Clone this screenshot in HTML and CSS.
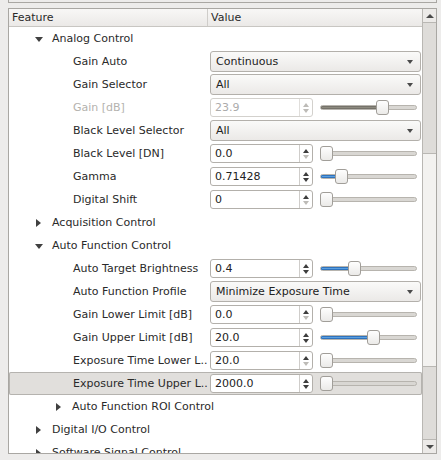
FILE: index.html
```html
<!DOCTYPE html>
<html>
<head>
<meta charset="utf-8">
<link rel="stylesheet" href="styles.css">
</head>
<body>
<div class="stub"></div>
<div class="tree">
  <div class="main">
    <div class="header">
      <div class="hcell hfeat">Feature</div>
      <div class="hcell hval">Value</div>
    </div>
    <div class="rows">
      <div class="row"><div class="name l1"><span class="arr down"></span>Analog Control</div><div class="val"></div></div>

      <div class="row"><div class="name leaf2">Gain Auto</div><div class="val"><div class="combo"><span>Continuous</span><span class="carr"></span></div></div></div>
      <div class="row"><div class="name leaf2">Gain Selector</div><div class="val"><div class="combo"><span>All</span><span class="carr"></span></div></div></div>
      <div class="row"><div class="name leaf2 dis">Gain [dB]</div><div class="val">
        <div class="spin dis"><span class="stext">23.9</span><span class="sbtn"><i class="up off"></i><i class="dn off"></i></span></div>
        <div class="slider"><div class="track"><div class="fill gray" style="width:57px"></div></div><div class="knob" style="left:56px"></div></div>
      </div></div>
      <div class="row"><div class="name leaf2">Black Level Selector</div><div class="val"><div class="combo"><span>All</span><span class="carr"></span></div></div></div>
      <div class="row"><div class="name leaf2">Black Level [DN]</div><div class="val">
        <div class="spin"><span class="stext">0.0</span><span class="sbtn"><i class="up"></i><i class="dn off"></i></span></div>
        <div class="slider"><div class="track"></div><div class="knob" style="left:0px"></div></div>
      </div></div>
      <div class="row"><div class="name leaf2">Gamma</div><div class="val">
        <div class="spin"><span class="stext">0.71428</span><span class="sbtn"><i class="up"></i><i class="dn"></i></span></div>
        <div class="slider"><div class="track"><div class="fill" style="width:16px"></div></div><div class="knob" style="left:15px"></div></div>
      </div></div>
      <div class="row"><div class="name leaf2">Digital Shift</div><div class="val">
        <div class="spin"><span class="stext">0</span><span class="sbtn"><i class="up"></i><i class="dn off"></i></span></div>
        <div class="slider"><div class="track"></div><div class="knob" style="left:0px"></div></div>
      </div></div>

      <div class="row"><div class="name l1"><span class="arr right"></span>Acquisition Control</div><div class="val"></div></div>
      <div class="row"><div class="name l1"><span class="arr down"></span>Auto Function Control</div><div class="val"></div></div>

      <div class="row"><div class="name leaf2">Auto Target Brightness</div><div class="val">
        <div class="spin"><span class="stext">0.4</span><span class="sbtn"><i class="up"></i><i class="dn"></i></span></div>
        <div class="slider"><div class="track"><div class="fill" style="width:29px"></div></div><div class="knob" style="left:28px"></div></div>
      </div></div>
      <div class="row"><div class="name leaf2">Auto Function Profile</div><div class="val"><div class="combo"><span>Minimize Exposure Time</span><span class="carr"></span></div></div></div>
      <div class="row"><div class="name leaf2">Gain Lower Limit [dB]</div><div class="val">
        <div class="spin"><span class="stext">0.0</span><span class="sbtn"><i class="up"></i><i class="dn off"></i></span></div>
        <div class="slider"><div class="track"></div><div class="knob" style="left:0px"></div></div>
      </div></div>
      <div class="row"><div class="name leaf2">Gain Upper Limit [dB]</div><div class="val">
        <div class="spin"><span class="stext">20.0</span><span class="sbtn"><i class="up"></i><i class="dn"></i></span></div>
        <div class="slider"><div class="track"><div class="fill" style="width:48px"></div></div><div class="knob" style="left:47px"></div></div>
      </div></div>
      <div class="row"><div class="name leaf2">Exposure Time Lower L..</div><div class="val">
        <div class="spin"><span class="stext">20.0</span><span class="sbtn"><i class="up"></i><i class="dn off"></i></span></div>
        <div class="slider"><div class="track"></div><div class="knob" style="left:0px"></div></div>
      </div></div>
      <div class="row sel"><div class="name leaf2">Exposure Time Upper L..</div><div class="val">
        <div class="spin"><span class="stext">2000.0</span><span class="sbtn"><i class="up"></i><i class="dn"></i></span></div>
        <div class="slider"><div class="track"></div><div class="knob" style="left:0px"></div></div>
      </div></div>
      <div class="row"><div class="name l2"><span class="arr right"></span>Auto Function ROI Control</div><div class="val"></div></div>

      <div class="row"><div class="name l1"><span class="arr right"></span>Digital I/O Control</div><div class="val"></div></div>
      <div class="row"><div class="name l1"><span class="arr right"></span>Software Signal Control</div><div class="val"></div></div>
    </div>
  </div>
  <div class="sbar">
    <div class="sbtn-v"><span class="sup"></span></div>
    <div class="strack"><div class="sthumb"></div></div>
    <div class="sbtn-v"><span class="sdn"></span></div>
  </div>
</div>
</body>
</html>
```

FILE: styles.css
```css
* { box-sizing: border-box; }
html, body { margin: 0; padding: 0; }
body {
  background: #edeceb;
  font-family: "DejaVu Sans", sans-serif;
  font-size: 11px;
  color: #2a2a2a;
  width: 441px;
  height: 460px;
  overflow: hidden;
}
.stub {
  margin: 0 4px 0 8px;
  height: 3px;
  border: 1px solid #a9a7a3;
  border-top: none;
}
.tree {
  margin: 5px 4px 0 8px;
  height: 446px;
  border: 1px solid #a9a7a3;
  background: #fff;
  display: flex;
}
.main {
  flex: 1;
  display: flex;
  flex-direction: column;
  min-width: 0;
}
.header {
  display: flex;
  height: 18px;
  border-bottom: 1px solid #c8c6c2;
  background: linear-gradient(#f8f7f6, #ebe9e7);
  flex: none;
}
.hcell {
  display: flex;
  align-items: center;
  padding-left: 3px;
  color: #2a2a2a;
}
.hfeat { width: 199px; border-right: 1px solid #cfcdca; }
.hval { flex: 1; padding-left: 3px; }
.rows {
  flex: 1;
  overflow: hidden;
}
.row {
  display: flex;
  height: 23px;
  align-items: center;
}
.row.sel {
  background: #e1dfdc;
  box-shadow: inset 0 0 0 1px #b5b3af;
  border-radius: 2px;
}
.name {
  width: 199px;
  flex: none;
  white-space: nowrap;
  display: flex;
  align-items: center;
}
.name.l1 { padding-left: 26px; }
.name.l2 { padding-left: 46px; }
.name.leaf2 { padding-left: 64px; }
.name.dis { color: #b4b2ae; }
.arr {
  width: 17px;
  height: 10px;
  position: relative;
  flex: none;
}
.arr.down::before {
  content: "";
  position: absolute;
  left: 0; top: 3px;
  border-left: 4.5px solid transparent;
  border-right: 4.5px solid transparent;
  border-top: 5px solid #404040;
}
.arr.right::before {
  content: "";
  position: absolute;
  left: 1px; top: 1px;
  border-top: 4.5px solid transparent;
  border-bottom: 4.5px solid transparent;
  border-left: 5px solid #404040;
}
.val {
  flex: 1;
  display: flex;
  align-items: center;
  padding-left: 2px;
}
.combo {
  width: 211px;
  height: 21px;
  border: 1px solid #b3b0ab;
  border-radius: 3px;
  background: linear-gradient(#fafaf9, #ebe9e7);
  display: flex;
  align-items: center;
  justify-content: space-between;
  padding: 0 7px 0 5px;
  color: #222;
}
.carr {
  width: 0; height: 0;
  border-left: 3.5px solid transparent;
  border-right: 3.5px solid transparent;
  border-top: 4px solid #4a4a4a;
}
.spin {
  width: 103px;
  height: 19px;
  border: 1px solid #b3b0ab;
  border-radius: 3px;
  background: #fff;
  display: flex;
  align-items: stretch;
  color: #222;
}
.spin.dis { border-color: #d3d1cd; color: #ababab; }
.stext {
  flex: 1;
  display: flex;
  align-items: center;
  padding-left: 4px;
}
.sbtn {
  width: 13px;
  border-left: 1px solid #cfcdca;
  display: flex;
  flex-direction: column;
  align-items: center;
  justify-content: center;
  gap: 2px;
}
.spin.dis .sbtn { border-left-color: #e0dedb; }
.sbtn i {
  display: block;
  width: 0; height: 0;
  border-left: 3.5px solid transparent;
  border-right: 3.5px solid transparent;
}
.sbtn i.up { border-bottom: 4px solid #3d3d3d; }
.sbtn i.dn { border-top: 4px solid #3d3d3d; }
.sbtn i.up.off { border-bottom-color: #bdbbb7; }
.sbtn i.dn.off { border-top-color: #bdbbb7; }
.slider {
  position: relative;
  margin-left: 7px;
  width: 97px;
  height: 15px;
}
.track {
  position: absolute;
  left: 0; right: 0; top: 5px;
  height: 5px;
  border: 1px solid #b7b4ae;
  border-radius: 3px;
  background: #d9d7d3;
  overflow: hidden;
}
.fill {
  height: 100%;
  background: #5a9fe0;
  box-shadow: inset 0 0 0 1px #2f73bd;
}
.fill.gray { background: #8c897e; box-shadow: inset 0 0 0 1px #75726a; }
.knob {
  position: absolute;
  top: 0;
  width: 13px;
  height: 15px;
  border: 1px solid #a19e99;
  border-radius: 3px;
  background: linear-gradient(#fefefe, #ebeae8);
}
.sbar {
  width: 14px;
  flex: none;
  border-left: 1px solid #b9b7b3;
  display: flex;
  flex-direction: column;
  background: #dedcd9;
}
.sbtn-v {
  height: 14px;
  flex: none;
  display: flex;
  align-items: center;
  justify-content: center;
  background: #eceae8;
}
.sbtn-v:first-child { border-bottom: 1px solid #b9b7b3; }
.sbtn-v:last-child { border-top: 1px solid #b9b7b3; }
.sup { width: 0; height: 0; border-left: 4px solid transparent; border-right: 4px solid transparent; border-bottom: 4px solid #4a4a4a; }
.sdn { width: 0; height: 0; border-left: 4px solid transparent; border-right: 4px solid transparent; border-top: 4px solid #4a4a4a; }
.strack { flex: 1; position: relative; }
.sthumb {
  position: absolute;
  left: 0; right: 0;
  top: 130px; height: 214px;
  background: #f3f2f0;
  border-top: 1px solid #b9b7b3;
  border-bottom: 1px solid #b9b7b3;
}
```
